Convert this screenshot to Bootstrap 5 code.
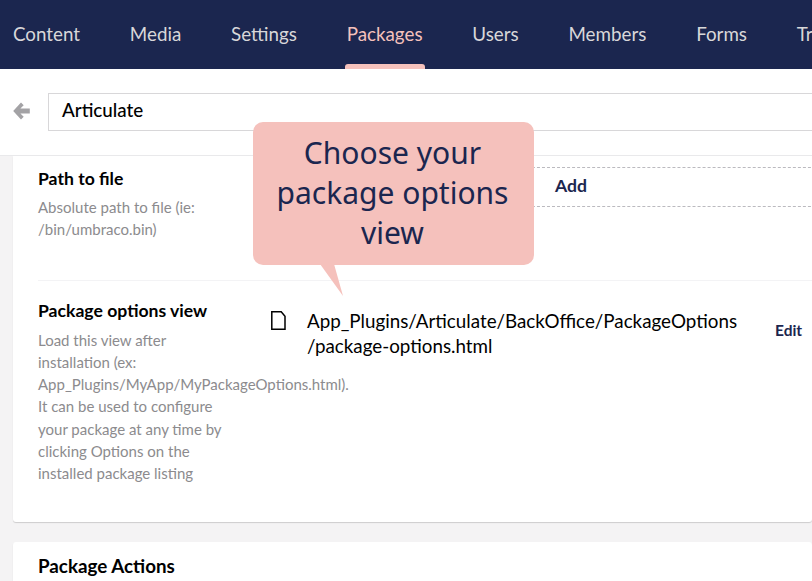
<!DOCTYPE html>
<html lang="en">
<head>
    <meta charset="UTF-8" />
    <meta name="viewport" content="width=device-width, initial-scale=1" />
    <title>Package options</title>
    <link rel="stylesheet" href="https://cdn.jsdelivr.net/npm/bootstrap@5.3.0/dist/css/bootstrap.min.css" />
    <style>
        html, body {
          height: 581px;
          overflow: hidden;
        }

        body {
          background-color: #f4f3f4;
          font-family: Lato, sans-serif;
          color: #000;
          position: relative;
          font-variant-ligatures: common-ligatures;
          text-rendering: optimizeLegibility;
        }

        .top-bar {
          background-color: #1b264f;
          height: 69px;
          padding-left: 13px;
          gap: 49.8px;
          white-space: nowrap;
          overflow: hidden;
        }

        .top-link {
          position: relative;
          color: #d8d7d9;
          font-size: 18.8px;
          text-decoration: none;
          line-height: 67px;
          height: 69px;
        }

        .top-link.is-active {
          color: #f5c1bc;
        }

        .top-link.is-active::after {
          content: "";
          position: absolute;
          left: -2px;
          right: -2px;
          bottom: 0;
          height: 5px;
          background-color: #f5c1bc;
          border-radius: 3px 3px 0 0;
        }

        .edit-header {
          background-color: #fff;
          height: 87px;
          padding: 24px 0 0 13px;
          border-bottom: 1px solid #e9e9eb;
          gap: 17px;
        }

        .name-field {
          width: 800px;
          height: 38px;
          flex-shrink: 0;
          border: 1px solid #d8d7d9;
          padding: 0 13px;
          font-size: 18.8px;
          line-height: 32px;
          font-weight: 500;
        }

        .back-icon {
          margin-top: 9px;
          flex-shrink: 0;
        }

        .panel {
          background-color: #fff;
          margin-left: 13px;
          border-radius: 3px;
          box-shadow: 0 1px 1px rgba(0, 0, 0, 0.16);
          padding-left: 25px;
        }

        .panel-first {
          height: 366px;
          border-radius: 0 0 3px 3px;
        }

        .panel-next {
          margin-top: 20px;
          padding-top: 13px;
          height: 60px;
        }

        .panel-next .prop-title {
          font-size: 18.8px;
        }

        .prop-row {
          display: flex;
        }

        .prop-first {
          height: 125px;
          padding-top: 12px;
          border-bottom: 1px solid #f3f3f5;
        }

        .prop-second {
          padding-top: 19px;
        }

        .prop-label {
          width: 233px;
          flex-shrink: 0;
        }

        .prop-title {
          font-size: 17.6px;
          font-weight: 700;
          line-height: 22px;
          margin: 0;
        }

        .prop-help {
          width: 190px;
          font-size: 15px;
          line-height: 22.15px;
          color: #8c8b8e;
          margin: 6px 0 0;
        }

        .prop-second .prop-help {
          margin-top: 7px;
        }

        .add-box {
          width: 560px;
          height: 40px;
          margin-top: -1px;
          flex-shrink: 0;
          border-top: 1px dashed #bbbabf;
          border-bottom: 1px dashed #bbbabf;
          padding-left: 284px;
          font-size: 17.6px;
          font-weight: 700;
          line-height: 35px;
          color: #1b264f;
        }

        .file-row {
          width: 600px;
          flex-shrink: 0;
          gap: 20px;
          padding-top: 8px;
        }

        .file-icon {
          margin-top: 3px;
          flex-shrink: 0;
        }

        .file-path {
          width: 448px;
          font-size: 18.8px;
          line-height: 25px;
          flex-shrink: 0;
        }

        .file-edit {
          color: #1b264f;
          font-size: 15.5px;
          font-weight: 700;
          line-height: 22px;
          margin-top: 11px;
        }

        .callout {
          position: absolute;
          left: 253px;
          top: 122px;
          width: 281px;
          height: 143px;
          background-color: #f5c1bc;
          border-radius: 10px;
          color: #1b264f;
          font-family: "Noto Sans", sans-serif;
          font-size: 30px;
          line-height: 40px;
          text-align: center;
          padding: 11px 12px 0 10px;
        }

        .callout-tail {
          position: absolute;
          left: 67px;
          top: 142px;
        }
    </style>
</head>
<body>

<!-- Top bar -->
<nav class="top-bar d-flex">
    <a class="top-link" href="#">Content</a>
    <a class="top-link" href="#">Media</a>
    <a class="top-link" href="#">Settings</a>
    <a class="top-link is-active" href="#">Packages</a>
    <a class="top-link" href="#">Users</a>
    <a class="top-link" href="#">Members</a>
    <a class="top-link" href="#">Forms</a>
    <a class="top-link" href="#">Translation</a>
</nav>

<!-- Name -->
<div class="edit-header d-flex">
    <svg class="back-icon" width="18" height="18" viewBox="0 0 18 18">
        <path fill="#a3a2a5" d="M8 0.6 0.2 9l7.8 8.4 2.7-2.7-3.3-3.2h9.4v-5H7.4l3.3-3.2z" />
    </svg>
    <div class="name-field">Articulate</div>
</div>

<!-- Package files -->
<div class="panel panel-first">
    <div class="prop-row prop-first">
        <div class="prop-label">
            <h5 class="prop-title">Path to file</h5>
            <p class="prop-help">Absolute path to file (ie: /bin/umbraco.bin)</p>
        </div>
        <div class="add-box">Add</div>
    </div>
    <div class="prop-row prop-second">
        <div class="prop-label">
            <h5 class="prop-title">Package options view</h5>
            <p class="prop-help">Load this view after installation (ex: <span class="text-nowrap">App_Plugins/MyApp/MyPackageOptions.html).</span> It can be used to configure your package at any time by clicking Options on the installed package listing</p>
        </div>
        <div class="file-row d-flex">
            <svg class="file-icon" width="16" height="19" viewBox="0 0 16 19">
                <path fill="none" stroke="#000" stroke-width="1.5" d="M0.8 0.8h9.4l3.8 4.4v13H0.8z" />
            </svg>
            <div class="file-path">App_Plugins/Articulate/BackOffice/PackageOptions /package-options.html</div>
            <div class="file-edit">Edit</div>
        </div>
    </div>
</div>

<div class="panel panel-next">
    <h5 class="prop-title">Package Actions</h5>
</div>

<!-- Callout -->
<div class="callout">
    Choose your package options view
    <svg class="callout-tail" width="24" height="32" viewBox="0 0 24 32">
        <path fill="#f5c1bc" d="M0 0h14l9 32z" />
    </svg>
</div>

<script src="https://cdn.jsdelivr.net/npm/bootstrap@5.3.0/dist/js/bootstrap.bundle.min.js"></script>
</body>
</html>
